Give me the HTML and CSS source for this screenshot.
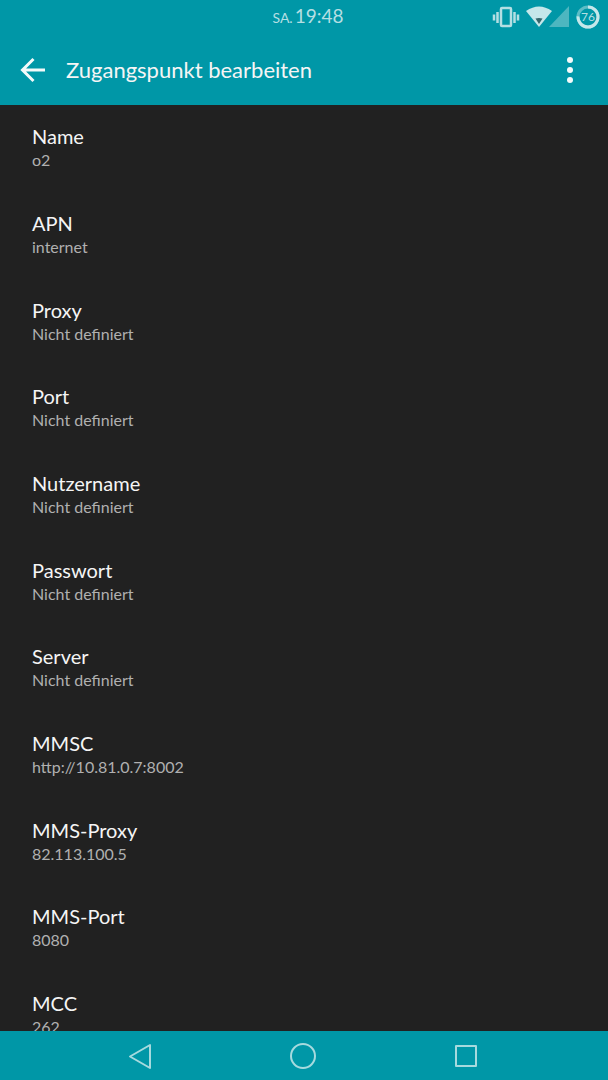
FILE: index.html
```html
<!DOCTYPE html>
<html lang="de">
<head>
    <meta charset="UTF-8">
    <title>Zugangspunkt bearbeiten</title>
    <meta name="viewport" content="width=device-width, initial-scale=1.0">
    <link rel="stylesheet" href="styles.css">
</head>
<body>
    <div class="status-bar">
        <div class="clock"><span class="day">SA.</span><span>19:48</span></div>
        <div class="status-icons">
            <!-- vibrate -->
            <svg width="28" height="24" viewBox="0 0 28 24" fill="none" stroke="#b5dfe3" stroke-width="2">
                <rect x="9" y="3" width="10" height="18" rx="1" stroke-width="2.500"/>
                <path stroke-width="2.500" d="M5.500 7v11M2 9.500v6M22.500 7v11M26 9.500v6"/>
            </svg>
            <!-- wifi -->
            <svg class="wifi" width="26" height="24" viewBox="0 0 26 24">
                <path d="M0 6Q13-3 26 6L13 22z" fill="#c5e7ea"/>
                <path d="M9.500 13.500q3.500-1 7 0L13 19z" fill="#35656b"/>
            </svg>
            <!-- signal -->
            <svg class="signal" width="20" height="24" viewBox="0 0 20 24">
                <path d="M0 22L20 1v21z" fill="#4db6c0"/>
            </svg>
            <!-- battery -->
            <div class="battery">
                <svg width="24" height="24" viewBox="0 0 24 24" fill="none" stroke-width="3">
                    <circle cx="12" cy="12" r="10" stroke="#5dbdc6"/>
                    <circle cx="12" cy="12" r="10" stroke="#c5e7ea" pathLength="100" stroke-dasharray="76 24" transform="rotate(-90 12 12)"/>
                </svg>
                <span class="battery-level">76</span>
            </div>
        </div>
    </div>

    <header class="toolbar">
        <button type="button" class="icon-btn" aria-label="Zurück">
            <svg width="26" height="26" viewBox="0 0 26 26" fill="none" stroke="#f3fafa" stroke-width="3">
                <path d="M13.500 2L2.500 13l11 11M2.500 13H25"/>
            </svg>
        </button>
        <h1>Zugangspunkt bearbeiten</h1>
        <button type="button" class="icon-btn" aria-label="Weitere Optionen">
            <svg width="8" height="28" viewBox="0 0 8 28" fill="#f3fafa">
                <circle cx="4" cy="4" r="3"/>
                <circle cx="4" cy="14" r="3"/>
                <circle cx="4" cy="24" r="3"/>
            </svg>
        </button>
    </header>

    <main class="settings">
        <button type="button" class="setting"><span class="label">Name</span><span class="value">o2</span></button>
        <button type="button" class="setting"><span class="label">APN</span><span class="value">internet</span></button>
        <button type="button" class="setting"><span class="label">Proxy</span><span class="value">Nicht definiert</span></button>
        <button type="button" class="setting"><span class="label">Port</span><span class="value">Nicht definiert</span></button>
        <button type="button" class="setting"><span class="label">Nutzername</span><span class="value">Nicht definiert</span></button>
        <button type="button" class="setting"><span class="label">Passwort</span><span class="value">Nicht definiert</span></button>
        <button type="button" class="setting"><span class="label">Server</span><span class="value">Nicht definiert</span></button>
        <button type="button" class="setting"><span class="label">MMSC</span><span class="value">http://10.81.0.7:8002</span></button>
        <button type="button" class="setting"><span class="label">MMS-Proxy</span><span class="value">82.113.100.5</span></button>
        <button type="button" class="setting"><span class="label">MMS-Port</span><span class="value">8080</span></button>
        <button type="button" class="setting"><span class="label">MCC</span><span class="value">262</span></button>
    </main>

    <nav class="nav-bar">
        <button type="button" class="icon-btn" aria-label="Zurück">
            <svg width="28" height="28" viewBox="0 0 28 28" fill="none" stroke="#a6dade" stroke-width="2" stroke-linejoin="round">
                <path d="M24 3v23L4 14.500z"/>
            </svg>
        </button>
        <button type="button" class="icon-btn" aria-label="Startseite">
            <svg width="28" height="28" viewBox="0 0 28 28" fill="none" stroke="#a6dade" stroke-width="2">
                <circle cx="14" cy="14" r="12"/>
            </svg>
        </button>
        <button type="button" class="icon-btn" aria-label="Übersicht">
            <svg width="28" height="28" viewBox="0 0 28 28" fill="none" stroke="#a6dade" stroke-width="2" stroke-linejoin="round">
                <rect x="4" y="4" width="20" height="20"/>
            </svg>
        </button>
    </nav>
</body>
</html>
```

FILE: styles.css
```css
* {
    box-sizing: border-box;
}
body {
    margin: 0;
    height: 100vh;
    display: flex;
    flex-direction: column;
    font-family: Lato, 'Open Sans', sans-serif;
    background: #212121;
    color: #f5f5f5;
}
button {
    padding: 0;
    border: none;
    background: none;
    color: inherit;
    font: inherit;
    cursor: pointer;
}
svg {
    display: block;
}
.icon-btn {
    display: flex;
    align-items: center;
    justify-content: center;
}
/* Status bar */
.status-bar {
    flex: none;
    display: grid;
    grid-template-columns: 1fr auto 1fr;
    align-items: center;
    height: 34px;
    padding: 0 8px;
    background: #0097a7;
    color: #b5dfe3;
}
.clock {
    grid-column: 2;
    display: flex;
    align-items: baseline;
    gap: 2px;
    margin-left: 8px;
    font-size: 19px;
    line-height: 28px;
}
.day {
    font-size: 14px;
}
.status-icons {
    display: flex;
    justify-content: flex-end;
    align-items: center;
}
.wifi {
    margin-left: 6px;
}
.signal {
    margin-left: -3px;
}
.battery {
    position: relative;
    margin-left: 7px;
}
.battery-level {
    position: absolute;
    inset: 0;
    font-size: 12px;
    line-height: 24px;
    text-align: center;
}
/* Toolbar */
.toolbar {
    flex: none;
    display: flex;
    align-items: center;
    height: 71px;
    padding: 0 34px 0 20px;
    background: #0097a7;
}
.toolbar h1 {
    flex: 1;
    margin: 0 0 0 20px;
    font-size: 22px;
    line-height: 28px;
    font-weight: 400;
}
/* Settings list */
.settings {
    flex: 1;
    min-height: 0;
    display: grid;
    grid-auto-rows: 87px 87px 86px;
    padding-top: 17px;
    overflow-y: auto;
    scrollbar-width: none;
}
.setting {
    display: flex;
    flex-direction: column;
    padding: 0 32px;
    text-align: left;
}
.label {
    font-size: 20px;
    line-height: 28px;
}
.value {
    font-size: 16px;
    line-height: 20px;
    color: #b0b0b0;
}
/* Navigation bar */
.nav-bar {
    flex: none;
    display: flex;
    justify-content: space-between;
    align-items: center;
    height: 49px;
    padding: 0 128px 0 126px;
    background: #0097a7;
}
```
